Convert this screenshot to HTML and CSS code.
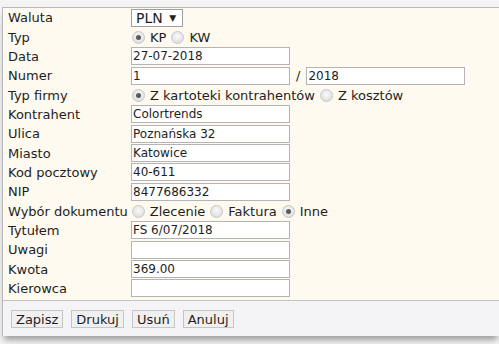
FILE: index.html
```html
<!DOCTYPE html>
<html lang="pl">

<head>
  <meta charset="UTF-8" />
  <meta name="viewport" content="width=device-width, initial-scale=1.0" />
  <title>Dokument kasowy</title>
  <link rel="stylesheet" href="styles.css">
</head>

<body>
  <div class="dialog">
    <form class="form-body">
      <div class="row">
        <span class="label">Waluta</span>
        <span class="field"><span class="select">PLN <span class="arrow">▼</span></span></span>
      </div>
      <div class="row">
        <span class="label">Typ</span>
        <span class="field">
          <label class="opt"><input type="radio" name="typ" checked /><span>KP</span></label>
          <label class="opt"><input type="radio" name="typ" /><span>KW</span></label>
        </span>
      </div>
      <div class="row">
        <span class="label">Data</span>
        <span class="field"><input type="text" class="txt" value="27-07-2018" /></span>
      </div>
      <div class="row">
        <span class="label">Numer</span>
        <span class="field">
          <input type="text" class="txt" value="1" />
          <span class="slash">/</span>
          <input type="text" class="txt" value="2018" />
        </span>
      </div>
      <div class="row">
        <span class="label">Typ firmy</span>
        <span class="field">
          <label class="opt"><input type="radio" name="firma" checked /><span>Z kartoteki kontrahentów</span></label>
          <label class="opt"><input type="radio" name="firma" /><span>Z kosztów</span></label>
        </span>
      </div>
      <div class="row">
        <span class="label">Kontrahent</span>
        <span class="field"><input type="text" class="txt" value="Colortrends" /></span>
      </div>
      <div class="row">
        <span class="label">Ulica</span>
        <span class="field"><input type="text" class="txt" value="Poznańska 32" /></span>
      </div>
      <div class="row">
        <span class="label">Miasto</span>
        <span class="field"><input type="text" class="txt" value="Katowice" /></span>
      </div>
      <div class="row">
        <span class="label">Kod pocztowy</span>
        <span class="field"><input type="text" class="txt" value="40-611" /></span>
      </div>
      <div class="row">
        <span class="label">NIP</span>
        <span class="field"><input type="text" class="txt" value="8477686332" /></span>
      </div>
      <div class="row">
        <span class="label label-auto">Wybór dokumentu</span>
        <span class="field">
          <label class="opt"><input type="radio" name="dok" /><span>Zlecenie</span></label>
          <label class="opt"><input type="radio" name="dok" /><span>Faktura</span></label>
          <label class="opt"><input type="radio" name="dok" checked /><span>Inne</span></label>
        </span>
      </div>
      <div class="row">
        <span class="label">Tytułem</span>
        <span class="field"><input type="text" class="txt" value="FS 6/07/2018" /></span>
      </div>
      <div class="row">
        <span class="label">Uwagi</span>
        <span class="field"><input type="text" class="txt" value="" /></span>
      </div>
      <div class="row">
        <span class="label">Kwota</span>
        <span class="field"><input type="text" class="txt" value="369.00" /></span>
      </div>
      <div class="row">
        <span class="label">Kierowca</span>
        <span class="field"><input type="text" class="txt" value="" /></span>
      </div>
    </form>

    <div class="buttons">
      <button type="button">Zapisz</button>
      <button type="button">Drukuj</button>
      <button type="button">Usuń</button>
      <button type="button">Anuluj</button>
    </div>
  </div>
</body>

</html>
```

FILE: styles.css
```css
body {
  margin: 0;
  padding: 0;
  width: 499px;
  height: 344px;
  overflow: hidden;
  background: #f3f3f3;
  font-family: Verdana, "DejaVu Sans", sans-serif;
  font-size: 13px;
  color: #1e1e1e;
}

.dialog {
  margin-top: 7px;
  margin-left: 2px;
  border-top: 1px solid #b9b9b9;
  border-left: 1px solid #b9b9b9;
  box-shadow: 0 6px 6px -2px rgba(0, 0, 0, 0.35);
}

.form-body {
  background: #fffaf0;
  padding: 0 0 2px 5px;
  margin: 0;
}

.row {
  display: flex;
  align-items: center;
  height: 19.35px;
}

.label {
  width: 123px;
  flex: none;
  white-space: nowrap;
}

.label-auto {
  width: auto;
  margin-right: 3px;
}

.field {
  display: flex;
  align-items: center;
}

.opt {
  display: flex;
  align-items: center;
  margin-right: 4px;
  white-space: nowrap;
}

.txt {
  box-sizing: border-box;
  width: 159px;
  height: 18px;
  margin: 0;
  padding: 0 1px;
  border: 1px solid #b4b4b4;
  background: #fff;
  font-family: Verdana, "DejaVu Sans", sans-serif;
  font-size: 12px;
  color: #1e1e1e;
}

.slash {
  margin: 0 6px;
}

.select {
  box-sizing: border-box;
  display: inline-block;
  width: 52px;
  height: 18px;
  line-height: 16px;
  margin-top: 1px;
  padding-left: 4px;
  border: 1px solid #a0a0a0;
  background: #fff;
  font-size: 14px;
}

.arrow {
  font-size: 9px;
  vertical-align: 2px;
  margin-left: 2px;
}

input[type="radio"] {
  appearance: none;
  flex: none;
  width: 13px;
  height: 13px;
  margin: 0 5px 0 1px;
  border-radius: 50%;
  border: 1px solid #c8c8c8;
  background: radial-gradient(circle at 50% 40%, #fafafa, #d6d6d6);
  position: relative;
}

input[type="radio"]:checked::after {
  content: "";
  position: absolute;
  left: 3px;
  top: 3px;
  width: 5px;
  height: 5px;
  border-radius: 50%;
  background: #5a5a5a;
}

.buttons {
  display: flex;
  gap: 8px;
  padding: 9px 8px 8px;
  height: 18px;
  background: #f4f4f6;
  border-top: 1px solid #c4c4c4;
}

.buttons button {
  height: 18px;
  padding: 0 4px;
  border: 1px solid #c6c6c6;
  background: #f0f0f0;
  font-family: Verdana, "DejaVu Sans", sans-serif;
  font-size: 13px;
  color: #1e1e1e;
}
```
